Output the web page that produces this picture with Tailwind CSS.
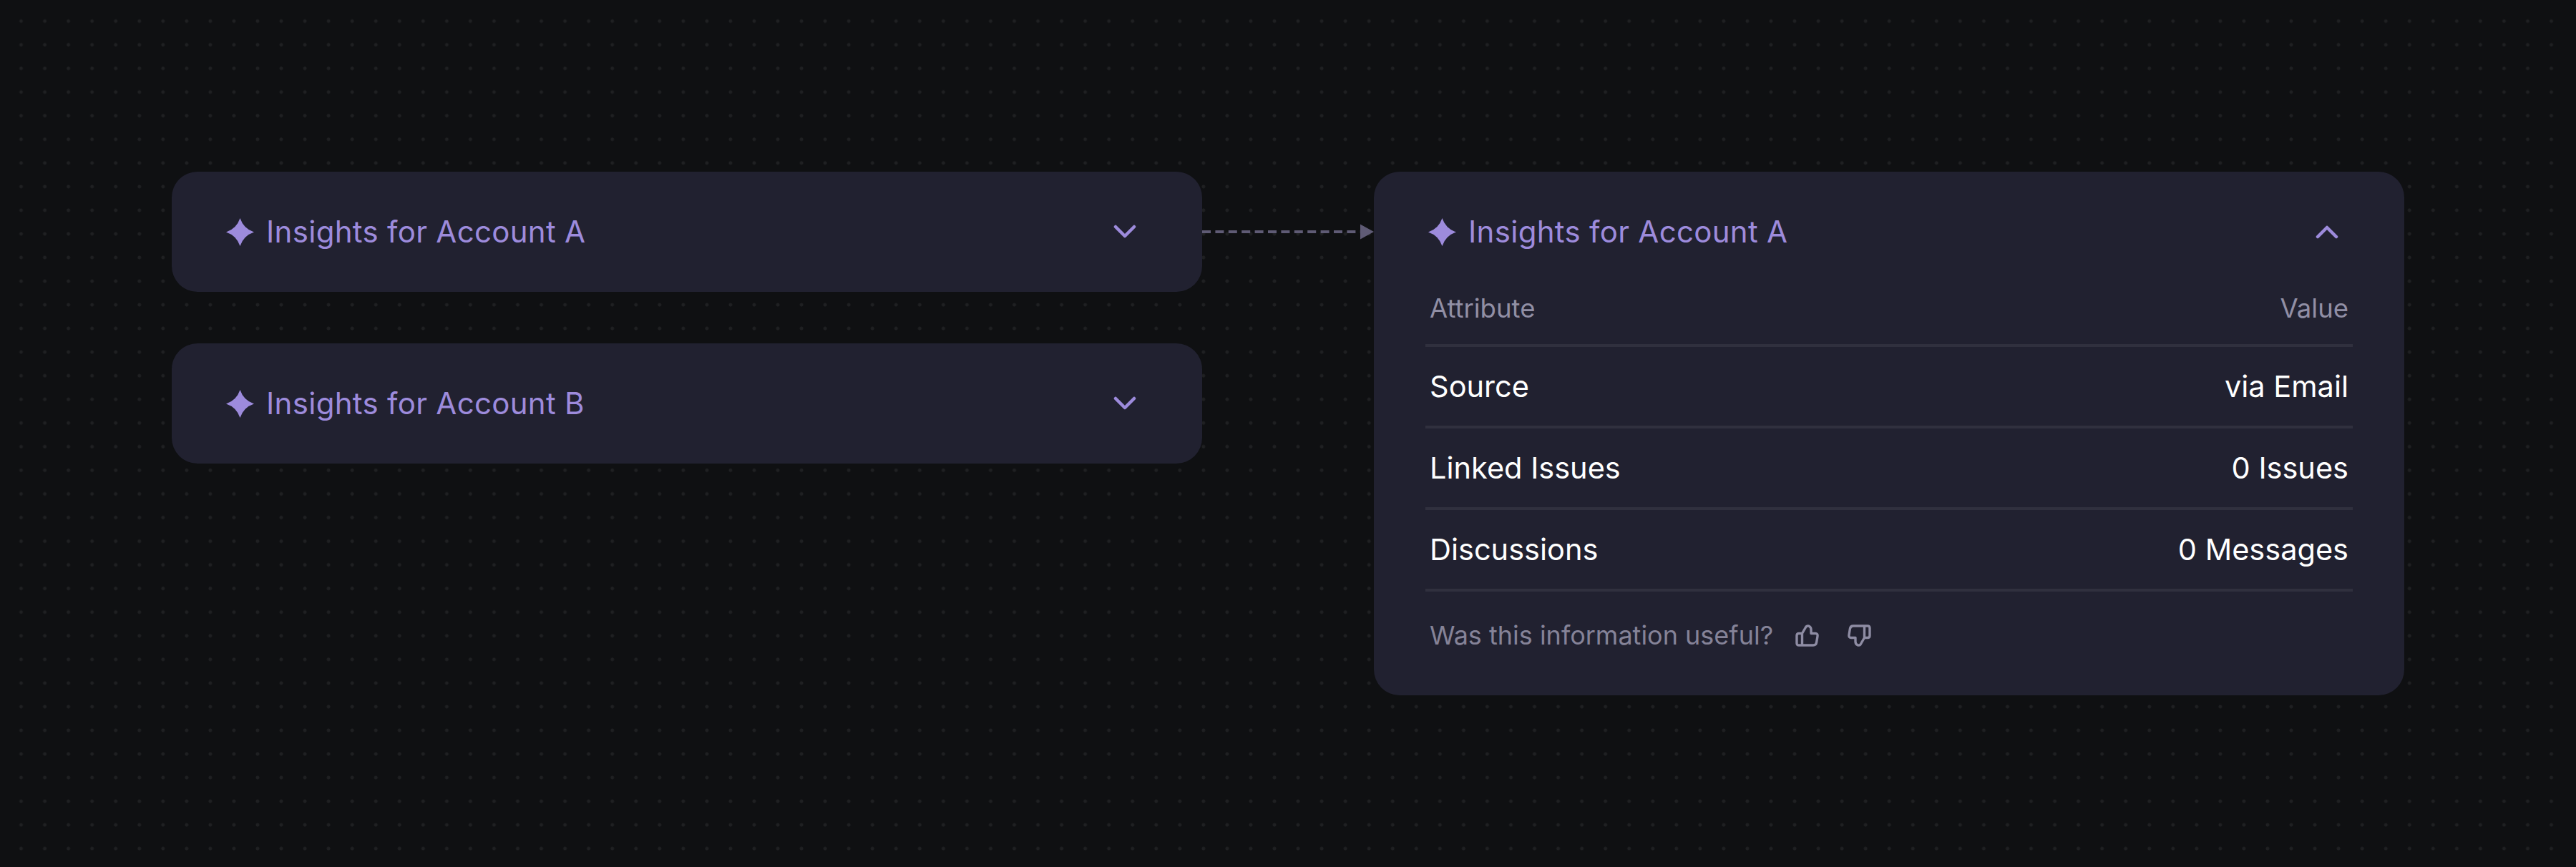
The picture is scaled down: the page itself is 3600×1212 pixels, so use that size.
<!DOCTYPE html>
<html lang="en">
<head>
  <meta charset="UTF-8" />
  <title>Insights</title>
  <script src="https://cdn.jsdelivr.net/npm/@tailwindcss/browser@4"></script>
</head>
<body class="relative w-[3600px] h-[1212px] overflow-hidden bg-[#0f1012] font-['Inter',sans-serif]">
  <!-- dot grid stops short of the window edge -->
  <div class="absolute left-[12.8px] top-[12.8px] w-[3570.5px] h-[1190px] bg-[radial-gradient(circle,#1f2022_2px,transparent_2.9px)] bg-[size:33.06px_33.06px]"></div>

  <main class="relative flex items-start pt-[240px] pl-[240px]">

    <!-- collapsed cards -->
    <div class="flex flex-col gap-[72px] w-[1440px]">
      <div class="flex items-center justify-between h-[168px] pl-[76px] pr-[92px] bg-[#212130] rounded-[36px]">
        <div class="flex items-center gap-[17px]">
          <svg class="w-[39px] h-[39px] text-[#9d8bdc]" viewBox="0 0 40 40" fill="currentColor"><path d="M20 0Q25 15 40 20Q25 25 20 40Q15 25 0 20Q15 15 20 0Z"/></svg>
          <span class="text-[42px] font-[420] tracking-[0.3px] leading-none text-[#9d8bdc]">Insights for Account A</span>
        </div>
        <svg class="w-[32px] h-[20px] text-[#9d8bdc]" viewBox="0 0 32 20" fill="none" stroke="currentColor" stroke-width="4.5" stroke-linecap="round" stroke-linejoin="round"><path d="M3 3L16 16L29 3"/></svg>
      </div>
      <div class="flex items-center justify-between h-[168px] pl-[76px] pr-[92px] bg-[#212130] rounded-[36px]">
        <div class="flex items-center gap-[17px]">
          <svg class="w-[39px] h-[39px] text-[#9d8bdc]" viewBox="0 0 40 40" fill="currentColor"><path d="M20 0Q25 15 40 20Q25 25 20 40Q15 25 0 20Q15 15 20 0Z"/></svg>
          <span class="text-[42px] font-[420] tracking-[0.3px] leading-none text-[#9d8bdc]">Insights for Account B</span>
        </div>
        <svg class="w-[32px] h-[20px] text-[#9d8bdc]" viewBox="0 0 32 20" fill="none" stroke="currentColor" stroke-width="4.5" stroke-linecap="round" stroke-linejoin="round"><path d="M3 3L16 16L29 3"/></svg>
      </div>
    </div>

    <!-- connector -->
    <div class="flex items-center w-[240px] h-[168px]">
      <svg class="w-[240px] h-[24px]" viewBox="0 0 240 24"><line x1="0" y1="12" x2="222" y2="12" stroke="#5f5b75" stroke-width="4" stroke-dasharray="12 6.4"/><path d="M221 1.5L240 12L221 22.5Z" fill="#5f5b75"/></svg>
    </div>

    <!-- expanded card -->
    <div class="flex flex-col w-[1440px] h-[732px] px-[72px] bg-[#212130] rounded-[36px]">
      <div class="flex items-center justify-between h-[168px] pl-[4px] pr-[20px] shrink-0">
        <div class="flex items-center gap-[17px]">
          <svg class="w-[39px] h-[39px] text-[#9d8bdc]" viewBox="0 0 40 40" fill="currentColor"><path d="M20 0Q25 15 40 20Q25 25 20 40Q15 25 0 20Q15 15 20 0Z"/></svg>
          <span class="text-[42px] font-[420] tracking-[0.3px] leading-none text-[#9d8bdc]">Insights for Account A</span>
        </div>
        <svg class="w-[32px] h-[20px] text-[#9d8bdc]" viewBox="0 0 32 20" fill="none" stroke="currentColor" stroke-width="4.5" stroke-linecap="round" stroke-linejoin="round"><path d="M3 17L16 4L29 17"/></svg>
      </div>
      <div class="flex items-start justify-between h-[77px] px-[6px] border-b-4 border-[#30303e] text-[36.5px] leading-[46px] text-[#918fa5]">
        <span>Attribute</span><span>Value</span>
      </div>
      <div class="flex items-center justify-between h-[114px] px-[6px] border-b-4 border-[#30303e] text-[41.5px] text-white">
        <span>Source</span><span>via Email</span>
      </div>
      <div class="flex items-center justify-between h-[114px] px-[6px] border-b-4 border-[#30303e] text-[41.5px] text-white">
        <span>Linked Issues</span><span>0 Issues</span>
      </div>
      <div class="flex items-center justify-between h-[114px] px-[6px] border-b-4 border-[#30303e] text-[41.5px] text-white">
        <span>Discussions</span><span>0 Messages</span>
      </div>
      <div class="flex items-center h-[122px] px-[6px] text-[36px] text-[#858398]">
        <span>Was this information useful?</span>
        <svg class="ml-[31px] w-[33px] h-[31px]" viewBox="0 0 33 31" fill="none" stroke="#8e8ca3" stroke-width="3.4" stroke-linecap="round" stroke-linejoin="round"><path d="M9.5 12.5V29M9.5 12.5L15 3Q16.5 1.5 19 2.2Q22 3.5 22 7V12.5H28Q31.6 12.5 31 16.5L29.6 25Q29 29 25 29H5Q2 29 2 26V15.5Q2 12.5 5 12.5H9.5"/></svg>
        <svg class="ml-[40px] w-[33px] h-[31px] rotate-180" viewBox="0 0 33 31" fill="none" stroke="#8e8ca3" stroke-width="3.4" stroke-linecap="round" stroke-linejoin="round"><path d="M9.5 12.5V29M9.5 12.5L15 3Q16.5 1.5 19 2.2Q22 3.5 22 7V12.5H28Q31.6 12.5 31 16.5L29.6 25Q29 29 25 29H5Q2 29 2 26V15.5Q2 12.5 5 12.5H9.5"/></svg>
      </div>
    </div>
  </main>
</body>
</html>
